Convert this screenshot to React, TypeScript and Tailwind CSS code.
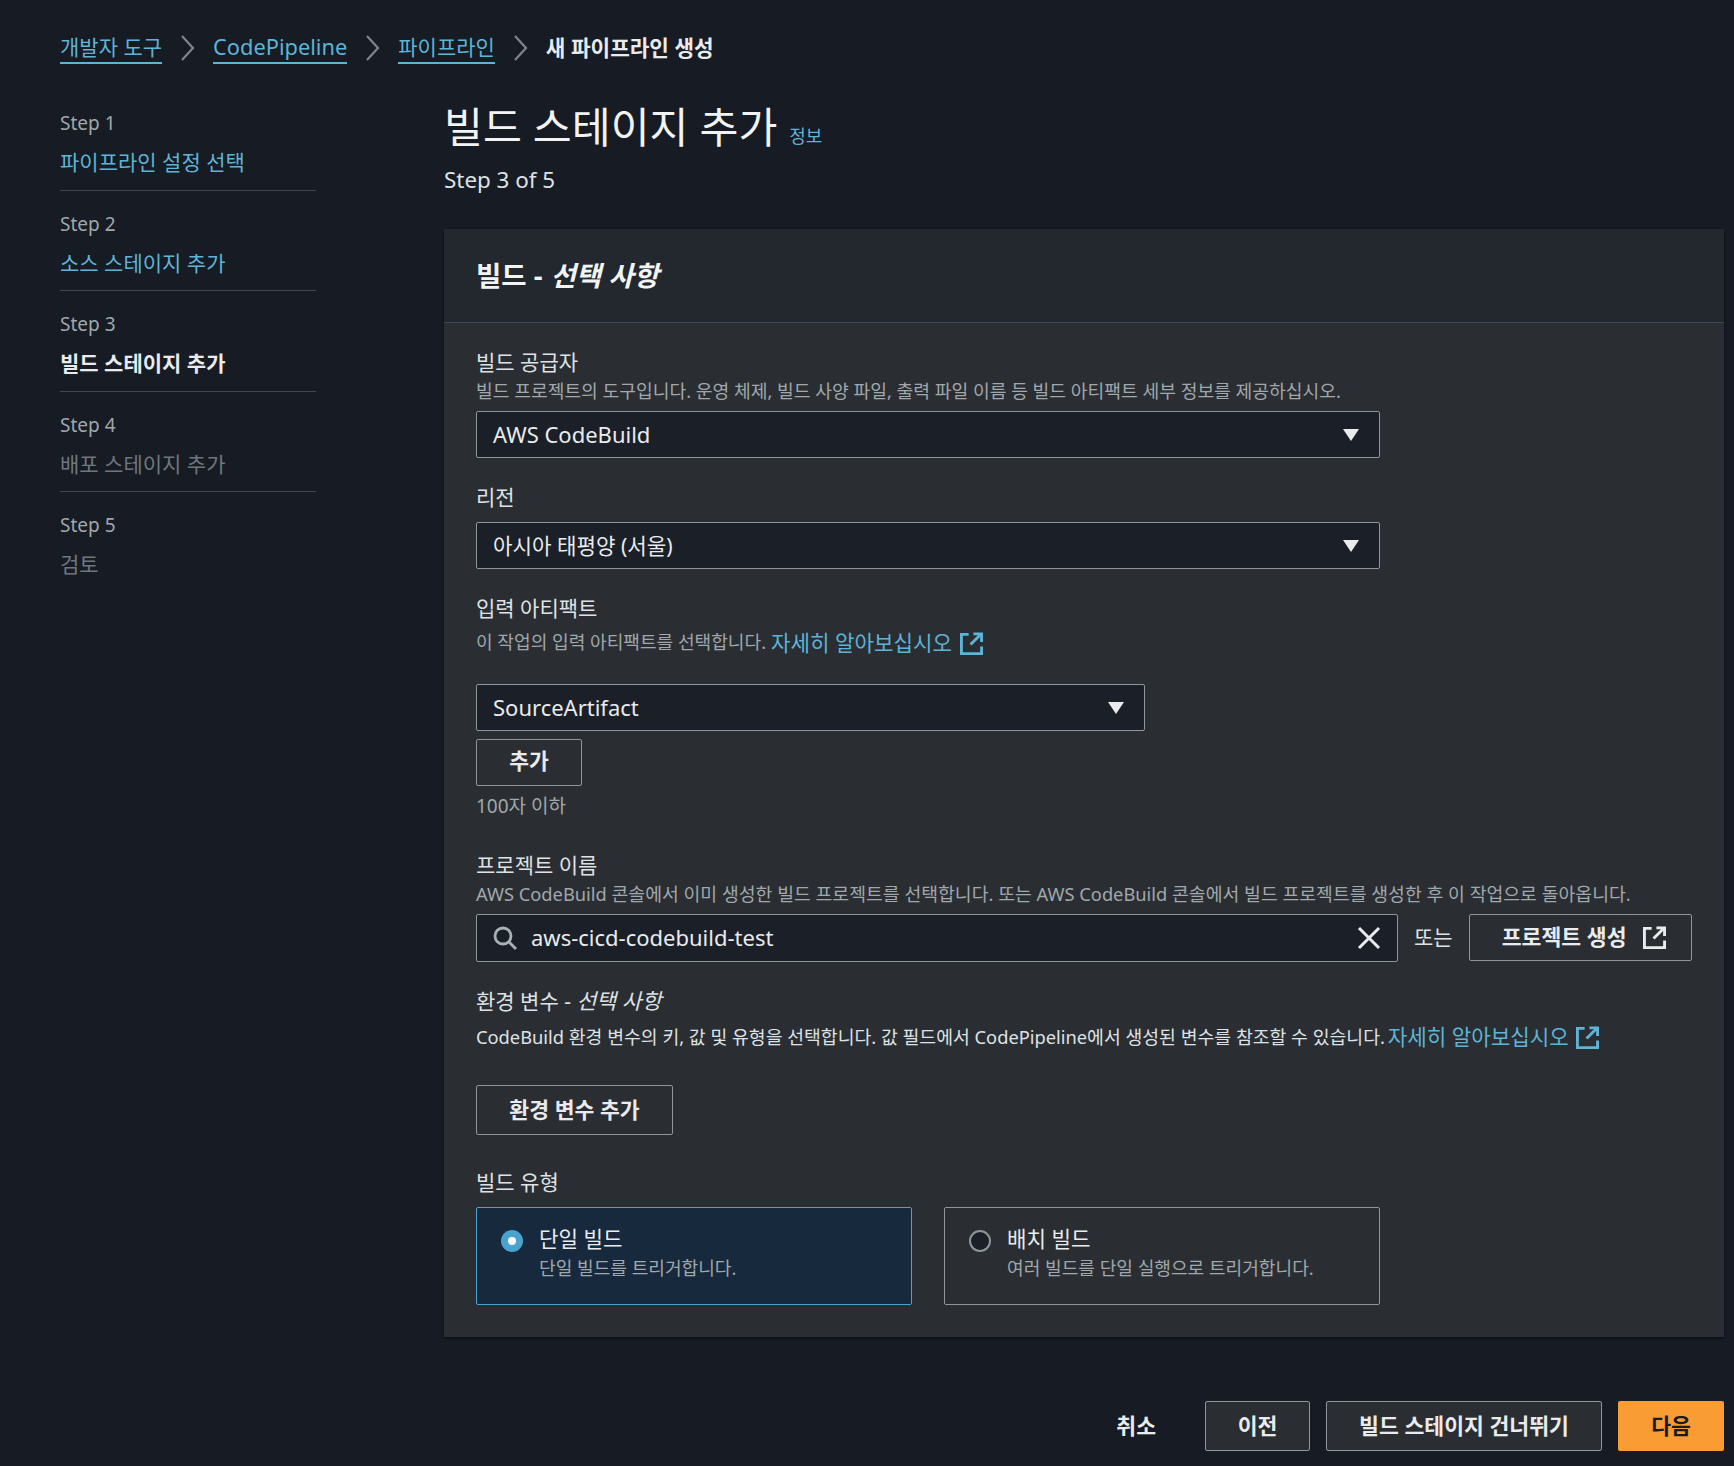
import React from "react";

const font = "[font-family:'Noto_Sans','Noto_Sans_CJK_KR',sans-serif]";

const ExternalIcon = ({ className }: { className: string }) => (
  <svg viewBox="0 0 24 24" fill="none" stroke="currentColor" strokeWidth="3" className={className}>
    <path d="M9 2.5H1.5v20h21V15" />
    <path d="M14 2h8.5v8.5" />
    <path d="M22 2 11 13" />
  </svg>
);

const Caret = () => (
  <svg viewBox="0 0 16 12" className="h-[12px] w-[16px] fill-[#e9ebed]">
    <path d="M0 0h16L8 12z" />
  </svg>
);

const Chevron = () => (
  <svg viewBox="0 0 15 26" fill="none" stroke="#7d868b" strokeWidth="2.2" className="mx-[18px] h-[26px] w-[15px]">
    <path d="m2 1 11 12L2 25" />
  </svg>
);

const SearchIcon = () => (
  <svg viewBox="0 0 24 24" fill="none" stroke="#a9b1b5" strokeWidth="2.8" className="h-[24px] w-[24px]">
    <circle cx="10" cy="10" r="8" />
    <path d="m16 16 7 7" />
  </svg>
);

const ClearIcon = () => (
  <svg viewBox="0 0 24 24" fill="none" stroke="#e9ebed" strokeWidth="3" className="h-[24px] w-[24px]">
    <path d="m2 2 20 20M22 2 2 22" />
  </svg>
);

const Select = ({ value, className }: { value: string; className: string }) => (
  <div className={`flex h-[47px] items-center justify-between rounded-[2px] border border-[#8d9699] bg-[#1a1f28] pl-[16px] pr-[20px] text-[#e9ebed] ${className}`}>
    <span>{value}</span>
    <Caret />
  </div>
);

const Button = ({ children, className }: { children: React.ReactNode; className: string }) => (
  <div className={`flex items-center justify-center rounded-[2px] border border-[#8d9699] text-[21.6px] font-bold text-[#e9ebed] ${className}`}>
    {children}
  </div>
);

const Step = ({ n, label, tone, last }: { n: number; label: string; tone: string; last?: boolean }) => (
  <div className={`h-[100.5px] ${last ? "" : "border-b border-[#414750]"}`}>
    <div className="flex h-[51px] items-end pb-[4px] text-[19px] leading-[28px] text-[#a0a8ab]">Step {n}</div>
    <div className={`mt-[5px] text-[21px] leading-[32px] ${tone}`}>{label}</div>
  </div>
);

const App = () => {
  return (
    <div className={`h-[1466px] w-[1734px] overflow-hidden bg-[#161b24] ${font}`}>
      <nav className="flex h-[94px] items-center pl-[60px] pt-[2px] text-[21px]">
        <span className="border-b-2 border-[#5db4d6] leading-[30px] text-[#5db4d6]">개발자 도구</span>
        <Chevron />
        <span className="border-b-2 border-[#5db4d6] text-[21.8px] leading-[30px] text-[#5db4d6]">CodePipeline</span>
        <Chevron />
        <span className="border-b-2 border-[#5db4d6] leading-[30px] text-[#5db4d6]">파이프라인</span>
        <Chevron />
        <span className="text-[21.3px] font-bold leading-[30px] text-[#e9ebed]">새 파이프라인 생성</span>
      </nav>

      <div className="flex pl-[60px]">
        <aside className="-mt-[4px] w-[256px]">
          <Step n={1} label="파이프라인 설정 선택" tone="text-[#5db4d6]" />
          <Step n={2} label="소스 스테이지 추가" tone="text-[#5db4d6]" />
          <Step n={3} label="빌드 스테이지 추가" tone="font-bold text-[#e9ebed]" />
          <Step n={4} label="배포 스테이지 추가" tone="text-[#6f777d]" />
          <Step n={5} label="검토" tone="text-[#6f777d]" last />
        </aside>

        <main className="ml-[128px] w-[1280px]">
          <div className="flex h-[64px] items-end">
            <h1 className="text-[42.3px] leading-[62px] text-[#f2f3f3]">빌드 스테이지 추가</h1>
            <span className="mb-[10px] ml-[12px] text-[18px] leading-[24px] text-[#5db4d6]">정보</span>
          </div>
          <p className="mt-[7px] text-[22.4px] leading-[30px] text-[#dfe2e4]">Step 3 of 5</p>

          <section className="mt-[34px] h-[1108px] bg-[#2a2e33] shadow-[0_1px_2px_#0b0e13]">
            <header className="flex h-[94px] items-center border-b border-[#414750] bg-[#23272e] pl-[32px] text-[27.5px] font-bold text-[#f2f3f3]">
              빌드 - <i className="ml-[8px]">선택 사항</i>
            </header>

            <div className="px-[32px] pt-[23px] text-[21px]">
              <div className="leading-[32px] text-[#dfe2e4]">빌드 공급자</div>
              <div className="text-[18.2px] leading-[26px] text-[#a0a8ab]">빌드 프로젝트의 도구입니다. 운영 체제, 빌드 사양 파일, 출력 파일 이름 등 빌드 아티팩트 세부 정보를 제공하십시오.</div>
              <Select value="AWS CodeBuild" className="mt-[7px] w-[904px] text-[22px]" />

              <div className="mt-[23px] leading-[32px] text-[#dfe2e4]">리전</div>
              <Select value="아시아 태평양 (서울)" className="mt-[9px] w-[904px] text-[21.2px]" />

              <div className="mt-[23px] leading-[32px] text-[#dfe2e4]">입력 아티팩트</div>
              <div className="mt-[2px] flex h-[34px] items-center text-[18.1px] text-[#a0a8ab]">
                이 작업의 입력 아티팩트를 선택합니다.
                <span className="ml-[5px] text-[21.2px] text-[#5db4d6]">자세히 알아보십시오</span>
                <ExternalIcon className="ml-[8px] h-[23px] w-[23px] text-[#5db4d6]" />
              </div>
              <Select value="SourceArtifact" className="mt-[24px] w-[669px] text-[22px]" />
              <Button className="mt-[8px] h-[47px] w-[106px]">
                <span className="-mt-[3px]">추가</span>
              </Button>
              <div className="mt-[5px] text-[19px] leading-[30px] text-[#a0a8ab]">100자 이하</div>

              <div className="mt-[28px] leading-[32px] text-[#dfe2e4]">프로젝트 이름</div>
              <div className="text-[18.3px] leading-[26px] text-[#a0a8ab]">AWS CodeBuild 콘솔에서 이미 생성한 빌드 프로젝트를 선택합니다. 또는 AWS CodeBuild 콘솔에서 빌드 프로젝트를 생성한 후 이 작업으로 돌아옵니다.</div>
              <div className="mt-[7px] flex items-start">
                <div className="flex h-[48px] w-[922px] items-center rounded-[2px] border border-[#8d9699] bg-[#1a1f28] pl-[16px] pr-[16px] text-[22px] text-[#e9ebed]">
                  <SearchIcon />
                  <span className="-mt-[2px] ml-[14px] flex-1">aws-cicd-codebuild-test</span>
                  <ClearIcon />
                </div>
                <span className="ml-[16px] mt-[7px] text-[21px] leading-[32px] text-[#dfe2e4]">또는</span>
                <Button className="ml-[16px] h-[47px] w-[223px] pl-[7px]">
                  프로젝트 생성
                  <ExternalIcon className="ml-[16px] h-[23px] w-[23px]" />
                </Button>
              </div>

              <div className="mt-[23px] leading-[32px] text-[#dfe2e4]">
                환경 변수 - <i className="text-[21.6px]">선택 사항</i>
              </div>
              <div className="mt-[3px] flex h-[34px] items-center text-[18.3px] text-[#dfe2e4]">
                CodeBuild 환경 변수의 키, 값 및 유형을 선택합니다. 값 필드에서 CodePipeline에서 생성된 변수를 참조할 수 있습니다.
                <span className="ml-[3px] text-[21.2px] text-[#5db4d6]">자세히 알아보십시오</span>
                <ExternalIcon className="ml-[7px] h-[23px] w-[23px] text-[#5db4d6]" />
              </div>
              <Button className="mt-[31px] h-[50px] w-[197px]">환경 변수 추가</Button>

              <div className="mt-[31px] leading-[32px] text-[#dfe2e4]">빌드 유형</div>
              <div className="mt-[9px] flex gap-[32px]">
                <div className="flex h-[98px] w-[436px] rounded-[2px] border border-[#4aa3cf] bg-[#17293d] pl-[24px] pt-[16px]">
                  <span className="mt-[6px] flex h-[22px] w-[22px] items-center justify-center rounded-full bg-[#4aa3cf]">
                    <span className="h-[8px] w-[8px] rounded-full bg-white" />
                  </span>
                  <div className="ml-[16px]">
                    <div className="text-[21.2px] leading-[30px] text-[#e9ebed]">단일 빌드</div>
                    <div className="text-[18.1px] leading-[28px] text-[#a0a8ab]">단일 빌드를 트리거합니다.</div>
                  </div>
                </div>
                <div className="flex h-[98px] w-[436px] rounded-[2px] border border-[#8d9699] pl-[24px] pt-[16px]">
                  <span className="mt-[6px] h-[22px] w-[22px] rounded-full border-2 border-[#8d9699] bg-[#1a1f28]" />
                  <div className="ml-[16px]">
                    <div className="text-[21.2px] leading-[30px] text-[#e9ebed]">배치 빌드</div>
                    <div className="text-[18.1px] leading-[28px] text-[#a0a8ab]">여러 빌드를 단일 실행으로 트리거합니다.</div>
                  </div>
                </div>
              </div>
            </div>
          </section>

          <footer className="mt-[64px] flex items-center justify-end">
            <span className="mr-[49px] text-[21.6px] font-bold text-[#e9ebed]">취소</span>
            <Button className="h-[50px] w-[105px] bg-[#2a2e33]">이전</Button>
            <Button className="ml-[16px] h-[50px] w-[276px] bg-[#2a2e33]">빌드 스테이지 건너뛰기</Button>
            <div className="ml-[16px] flex h-[50px] w-[106px] items-center justify-center rounded-[2px] bg-[#f89c33] text-[21.6px] font-bold text-[#161b24]">다음</div>
          </footer>
        </main>
      </div>
    </div>
  );
};

export default App;
